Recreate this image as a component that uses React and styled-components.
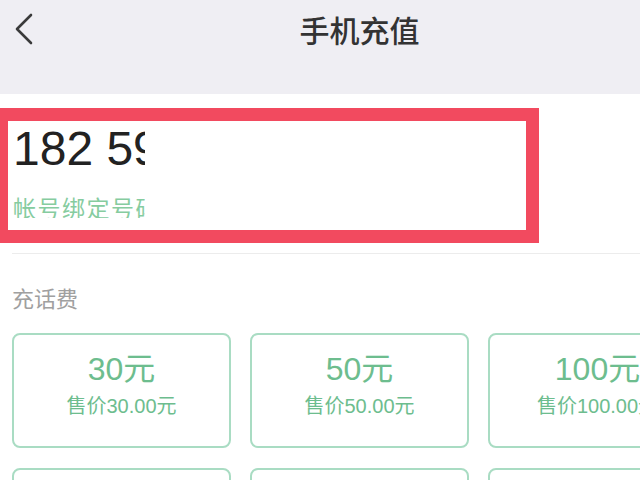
import React from 'react'
import styled, {createGlobalStyle} from 'styled-components'

const GlobalStyle = createGlobalStyle`
body {
  margin: 0;
  background: #ffffff;
  font-family: "Liberation Sans", "Noto Sans CJK SC", sans-serif;
}
`

const plans = [
  {face: '30元', price: '售价30.00元'},
  {face: '50元', price: '售价50.00元'},
  {face: '100元', price: '售价100.00元'},
  {face: '', price: ''},
  {face: '', price: ''},
  {face: '', price: ''},
]

const App = () => {
  return (
    <Viewport>
      <GlobalStyle />
      <Screen>
        <Header>
          <NavRow>
            <BackButton>
              <svg width="20" height="32" viewBox="0 0 20 32">
                <polyline points="17,2 3,16 17,30" fill="none" stroke="#3a3a3a" strokeWidth="2.6" strokeLinecap="round" strokeLinejoin="round" />
              </svg>
            </BackButton>
            <Title>手机充值</Title>
            <span />
          </NavRow>
        </Header>
        <AccountBox>
          <Clip>
            <PhoneNumber>182 59</PhoneNumber>
            <BoundHint>帐号绑定号码</BoundHint>
          </Clip>
        </AccountBox>
        <Divider />
        <SectionLabel>充话费</SectionLabel>
        <PlanGrid>
          {plans.map((p, i) => (
            <PlanCard key={i}>
              <Face>{p.face}</Face>
              <Price>{p.price}</Price>
            </PlanCard>
          ))}
        </PlanGrid>
      </Screen>
    </Viewport>
  )
}

const Viewport = styled.div`
width: 640px;
height: 480px;
overflow: hidden;
`
const Screen = styled.div`
width: 719px;
display: flex;
flex-direction: column;
`
const Header = styled.div`
height: 94px;
background-color: #efeef3;
`
const NavRow = styled.div`
height: 58px;
display: grid;
grid-template-columns: 1fr auto 1fr;
align-items: center;
`
const BackButton = styled.div`
display: flex;
align-items: center;
padding-left: 14px;
`
const Title = styled.div`
font-family: "Noto Sans CJK SC", sans-serif;
font-size: 30px;
font-weight: 500;
color: #333333;
line-height: 30px;
`
const AccountBox = styled.div`
margin-top: 14px;
margin-left: -5px;
width: 544px;
height: 135px;
box-sizing: border-box;
border: 13px solid #f24a5f;
padding-left: 5px;
`
const Clip = styled.div`
width: 132px;
overflow: hidden;
white-space: nowrap;
`
const PhoneNumber = styled.div`
font-size: 48px;
line-height: 55px;
color: #222222;
`
const BoundHint = styled.div`
margin-top: 20px;
font-family: "Noto Sans CJK SC", sans-serif;
font-size: 23px;
line-height: 22px;
letter-spacing: 1.5px;
color: #86cc9f;
`
const Divider = styled.div`
margin: 10px 0 0 12px;
height: 1px;
background-color: #ececec;
`
const SectionLabel = styled.div`
margin: 32px 0 0 12px;
font-family: "Noto Sans CJK SC", sans-serif;
font-size: 22px;
line-height: 22px;
color: #a0a0a0;
`
const PlanGrid = styled.div`
margin: 25px 0 0 12px;
display: grid;
grid-template-columns: repeat(3, 219px);
grid-auto-rows: 115px;
column-gap: 19px;
row-gap: 20px;
`
const PlanCard = styled.div`
box-sizing: border-box;
border: 2px solid #a9dcc3;
border-radius: 8px;
display: flex;
flex-direction: column;
align-items: center;
padding-top: 16px;
color: #6dbd8e;
`
const Face = styled.div`
font-size: 32px;
line-height: 36px;
`
const Price = styled.div`
margin-top: 7px;
font-size: 20px;
line-height: 24px;
`

export default App
